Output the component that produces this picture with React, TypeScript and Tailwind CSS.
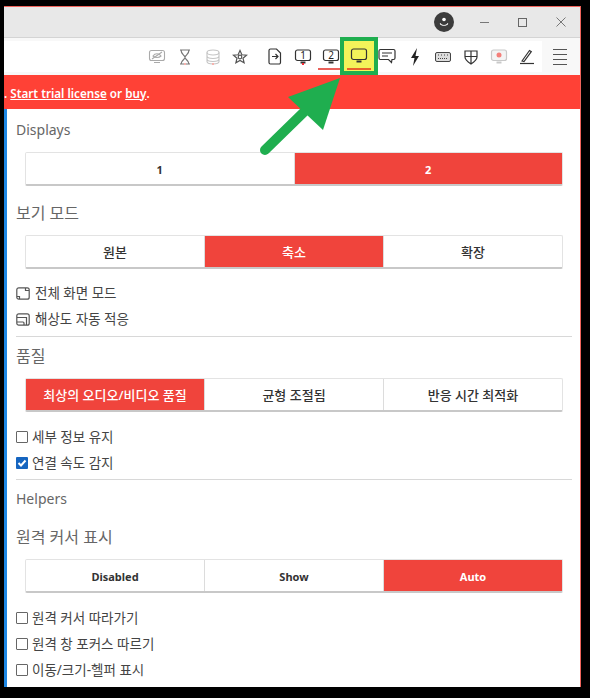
import React from "react";

const font = { fontFamily: '"Noto Sans", "Noto Sans CJK KR", sans-serif' };

function Monitor({ children, stroke = "#333", fill = "none" }: { children?: React.ReactNode; stroke?: string; fill?: string }) {
  return (
    <svg width="18" height="18" viewBox="0 0 18 18" fill="none">
      <rect x="1.5" y="2" width="15" height="10.5" rx="2" stroke={stroke} strokeWidth="1.2" fill={fill} />
      <path d="M6.5 14.5h5" stroke={stroke} strokeWidth="2" />
      {children}
    </svg>
  );
}

function Slot({ children, w = "w-7", dot }: { children: React.ReactNode; w?: string; dot?: string }) {
  return (
    <div className={`relative flex h-full ${w} shrink-0 items-center justify-center`}>
      {children}
      {dot === "pale" && <span className="absolute bottom-[7px] left-1/2 h-[2px] w-[2px] -translate-x-1/2 bg-[#f6b3ae]" />}
      {dot === "red" && <span className="absolute bottom-[7px] left-1/2 h-[2px] w-[2px] -translate-x-1/2 bg-red-500" />}
    </div>
  );
}

function Toolbar() {
  return (
    <div className="flex h-[37px] bg-[#f8f8f8]">
      <div className="my-[3px] flex w-[538px] items-center justify-end bg-white">
        <Slot>
          <svg width="18" height="18" viewBox="0 0 18 18" fill="none" stroke="#aaa" strokeWidth="1.1">
            <rect x="1.5" y="2.5" width="15" height="10" rx="2" />
            <path d="M6 14.5h6M4 11 14 4" />
            <path d="M5 8c2-3 6-3 8 0-2 2-6 2-8 0z" />
          </svg>
        </Slot>
        <Slot dot="pale">
          <svg width="14" height="16" viewBox="0 0 14 16" fill="none" stroke="#777" strokeWidth="1.2">
            <path d="M2 1h10M2 15h10M3 1c0 4 3 5 4 7 1 2-4 3-4 7M11 1c0 4-3 5-4 7-1 2 4 3 4 7" />
          </svg>
        </Slot>
        <Slot dot="pale">
          <svg width="16" height="16" viewBox="0 0 16 16" fill="none" stroke="#c4c4c4" strokeWidth="1.1">
            <ellipse cx="8" cy="3.5" rx="6" ry="2.500" />
            <path d="M2 3.500v9c0 3.300 12 3.300 12 0v-9M2 7c0 3.300 12 3.300 12 0M2 10c0 3.300 12 3.300 12 0" />
          </svg>
        </Slot>
        <Slot w="w-[26px]">
          <svg width="16" height="16" viewBox="0 0 16 16" fill="none" stroke="#555" strokeWidth="1.200">
            <path d="M8 1.500l1.900 4.300 4.600.4-3.500 3 1.100 4.600L8 11.400l-4.100 2.400L5 9.200l-3.500-3 4.600-.4z" />
            <circle cx="8" cy="8" r="1.800" />
          </svg>
        </Slot>
        <div className="w-2 shrink-0" />
        <Slot>
          <svg width="14" height="17" viewBox="0 0 14 17" fill="none" stroke="#333" strokeWidth="1.200">
            <path d="M2.500 1h6l4 4v9.500a1.500 1.500 0 0 1-1.500 1.500H2.500A1.500 1.500 0 0 1 1 14.500v-12A1.500 1.500 0 0 1 2.500 1z" />
            <path d="M4 8.500h6M7.500 6l2.500 2.500L7.500 11" />
          </svg>
        </Slot>
        <Slot dot="red">
          <div className="relative flex items-center justify-center">
            <Monitor />
            <span className="absolute top-[2px] text-[10px] leading-[11px] text-[#222]" style={font}>1</span>
          </div>
        </Slot>
        <Slot>
          <div className="relative flex items-center justify-center">
            <Monitor />
            <span className="absolute top-[2px] text-[10px] leading-[11px] text-[#222]" style={font}>2</span>
          </div>
          <span className="absolute bottom-[2px] left-[1px] h-[2px] w-6 bg-[#e9605a]" />
        </Slot>
        <Slot>
          <Monitor stroke="#333" />
        </Slot>
        <Slot>
          <svg width="18" height="17" viewBox="0 0 18 17" fill="none" stroke="#333" strokeWidth="1.200">
            <path d="M2.500 1.500h13a1.500 1.500 0 0 1 1.500 1.500v7a1.500 1.500 0 0 1-1.500 1.500H14l-.5 3-3-3h-8A1.500 1.500 0 0 1 1 10V3a1.500 1.500 0 0 1 1.500-1.500z" />
            <path d="M4 5h10M4 8h6" />
          </svg>
        </Slot>
        <Slot>
          <svg width="10" height="18" viewBox="0 0 10 18" fill="#222">
            <path d="M7 0 1 10h3.500L3 18l6-10H5.500z" />
          </svg>
        </Slot>
        <Slot>
          <svg width="16" height="10" viewBox="0 0 16 10" fill="#ddd" stroke="#444" strokeWidth="1">
            <rect x="0.500" y="0.500" width="15" height="9" rx="1.500" />
            <path d="M3 3h2M6 3h2M9 3h2M12 3h1M3 6.500h10" strokeDasharray="1 1" />
          </svg>
        </Slot>
        <Slot>
          <svg width="14" height="16" viewBox="0 0 14 16" fill="none" stroke="#333" strokeWidth="1.200">
            <path d="M1 2h12v6c0 3-3 5-6 7-3-2-6-4-6-7zM7 2v13M1 7.500h12" />
          </svg>
        </Slot>
        <Slot>
          <Monitor stroke="#c9c9c9" fill="#f4f4f4">
            <circle cx="9" cy="7" r="2.500" fill="#f47f7a" stroke="none" />
          </Monitor>
        </Slot>
        <Slot>
          <svg width="16" height="16" viewBox="0 0 16 16" fill="none" stroke="#333" strokeWidth="1.200">
            <path d="M3 12 10.500 1.500l1.800 1.200L5 12.500z" />
            <path d="M1 14.500h14" />
          </svg>
        </Slot>
        <div className="w-[1px] shrink-0" />
      </div>
      <div className="flex flex-1 items-center justify-center pr-[2px]">
        <div className="flex w-[14px] flex-col gap-[4px]">
          <span className="h-[1px] bg-[#555]" />
          <span className="h-[1px] bg-[#555]" />
          <span className="h-[1px] bg-[#555]" />
          <span className="h-[1px] bg-[#555]" />
        </div>
      </div>
    </div>
  );
}

function Group({ items, active, mt, latin }: { items: string[]; active: number; mt: string; latin?: boolean }) {
  return (
    <div className={`${mt} ml-[9px] mr-[9px] flex h-[34px] rounded-[2px] border-b-2 border-t border-x border-[#e3e3e3] border-b-[#c8c8c8] bg-white`}>
      {items.map((t, i) => (
        <div
          key={t}
          className={`flex flex-1 items-center justify-center pt-[3px] ${latin ? "text-[11px] font-bold" : "text-[13px] font-medium"} ${
            i === active ? "bg-[#f0443c] text-white" : "text-[#333]"
          } ${i > 0 ? "border-l border-[#dcdcdc]" : ""}`}
        >
          {t}
        </div>
      ))}
    </div>
  );
}

function Heading({ children, mt, ko }: { children: React.ReactNode; mt: string; ko?: boolean }) {
  return <div className={`${mt} h-[20px] ${ko ? "text-[16px]" : "text-[14px]"} leading-[20px] text-[#666]`}>{children}</div>;
}

function Check({ label, checked, mt }: { label: string; checked?: boolean; mt: string }) {
  return (
    <div className={`${mt} flex h-[20px] items-center gap-[4px] text-[13.5px] text-[#444]`}>
      {checked ? (
        <span className="flex h-3 w-3 items-center justify-center rounded-[1px] bg-[#1565c0]">
          <svg width="10" height="10" viewBox="0 0 10 10" fill="none" stroke="#fff" strokeWidth="2">
            <path d="M1.500 5 4 7.500 8.500 2.500" />
          </svg>
        </span>
      ) : (
        <span className="h-3 w-3 rounded-[1px] border border-[#666]" />
      )}
      {label}
    </div>
  );
}

function IconRow({ label, mt, inner }: { label: string; mt: string; inner?: boolean }) {
  return (
    <div className={`${mt} flex h-[20px] items-center gap-[5px] text-[13.5px] text-[#444]`}>
      <svg width="14" height="13" viewBox="0 0 14 13" fill="none" stroke="#555" strokeWidth="1.200">
        <rect x="0.800" y="0.800" width="12.400" height="11.400" rx="2" />
        {inner ? <path d="M1 9h6a1 1 0 0 1 1 1v2M1 4.500h9.500V12" /> : <path d="M1 9.500h2.500V12M9.500 1v2.500H13" />}
      </svg>
      {label}
    </div>
  );
}

export default function App() {
  return (
    <div className="relative h-[698px] w-[590px] overflow-hidden bg-black pb-[11px] pl-[4px] pr-[9px] pt-[6px]" style={font}>
      <div className="flex h-full flex-col border-t border-r border-[#f0645c] bg-white">
        <div className="flex h-[31px] shrink-0 items-center justify-end border-b border-[#d4d4d4] bg-[#e8e8e8]">
          <div className="flex h-[20px] w-[20px] items-center justify-center rounded-full bg-[#3c3c3c]">
            <svg width="12" height="12" viewBox="0 0 12 12" fill="#fff">
              <circle cx="6" cy="3.500" r="1.800" />
              <path d="M2.500 7c1 2.500 6 2.500 7 0l.8.800C9 10.500 3 10.500 1.700 7.800z" />
            </svg>
          </div>
          <div className="ml-[11px] flex w-[38px] justify-center">
            <span className="h-[1px] w-[9px] bg-[#777]" />
          </div>
          <div className="flex w-[39px] justify-center">
            <span className="h-[9px] w-[9px] border border-[#666]" />
          </div>
          <div className="flex w-[38px] justify-center">
            <svg width="10" height="10" viewBox="0 0 10 10" stroke="#777" strokeWidth="1">
              <path d="M.5.500l9 9M9.500.500l-9 9" />
            </svg>
          </div>
        </div>
        <Toolbar />
        <div className="flex h-[34px] shrink-0 items-center bg-[#ff4136] pt-[3px] text-[11.7px] font-semibold text-white">
          <span>.&nbsp;</span>
          <span className="underline">Start trial license</span>
          <span>&nbsp;or&nbsp;</span>
          <span className="underline">buy</span>
          <span>.</span>
        </div>
        <div className="flex-1 border-l-[3px] border-[#1e88e5] pl-[9px] pr-[8px]">
          <Heading mt="mt-[11px]">Displays</Heading>
          <Group items={["1", "2"]} active={1} mt="mt-[12px]" latin />
          <Heading ko mt="mt-[17px]">보기 모드</Heading>
          <Group items={["원본", "축소", "확장"]} active={1} mt="mt-[12px]" />
          <IconRow label="전체 화면 모드" mt="mt-[14px]" />
          <IconRow label="해상도 자동 적응" mt="mt-[6px]" inner />
          <div className="mt-[7px] h-px bg-[#d8d8d8]" />
          <Heading ko mt="mt-[9px]">품질</Heading>
          <Group items={["최상의 오디오/비디오 품질", "균형 조절됨", "반응 시간 최적화"]} active={0} mt="mt-[12px]" />
          <Check label="세부 정보 유지" mt="mt-[15px]" />
          <Check label="연결 속도 감지" checked mt="mt-[6px]" />
          <div className="mt-[6px] h-px bg-[#d8d8d8]" />
          <Heading mt="mt-[9px]">Helpers</Heading>
          <Heading ko mt="mt-[18px]">원격 커서 표시</Heading>
          <Group items={["Disabled", "Show", "Auto"]} active={2} mt="mt-[12px]" latin />
          <Check label="원격 커서 따라가기" mt="mt-[15px]" />
          <Check label="원격 창 포커스 따르기" mt="mt-[6px]" />
          <Check label="이동/크기-헬퍼 표시" mt="mt-[6px]" />
        </div>
      </div>
      {/* annotation overlays */}
      <div className="absolute left-[340px] top-[37px] flex h-[38px] w-[38px] items-center justify-center border-[4px] border-[#1fae4f] bg-[#f3f35a]">
        <Monitor />
        <span className="absolute bottom-[1px] left-[3px] h-[2px] w-[24px] bg-[#e8622a]" />
      </div>
      <svg className="absolute left-[255px] top-[70px]" width="95" height="90" viewBox="0 0 95 90">
        <path d="M10 80 50 41" stroke="#1fae4f" strokeWidth="10" strokeLinecap="round" />
        <path d="M85 8 33 27 68 60z" fill="#1fae4f" />
      </svg>
    </div>
  );
}
